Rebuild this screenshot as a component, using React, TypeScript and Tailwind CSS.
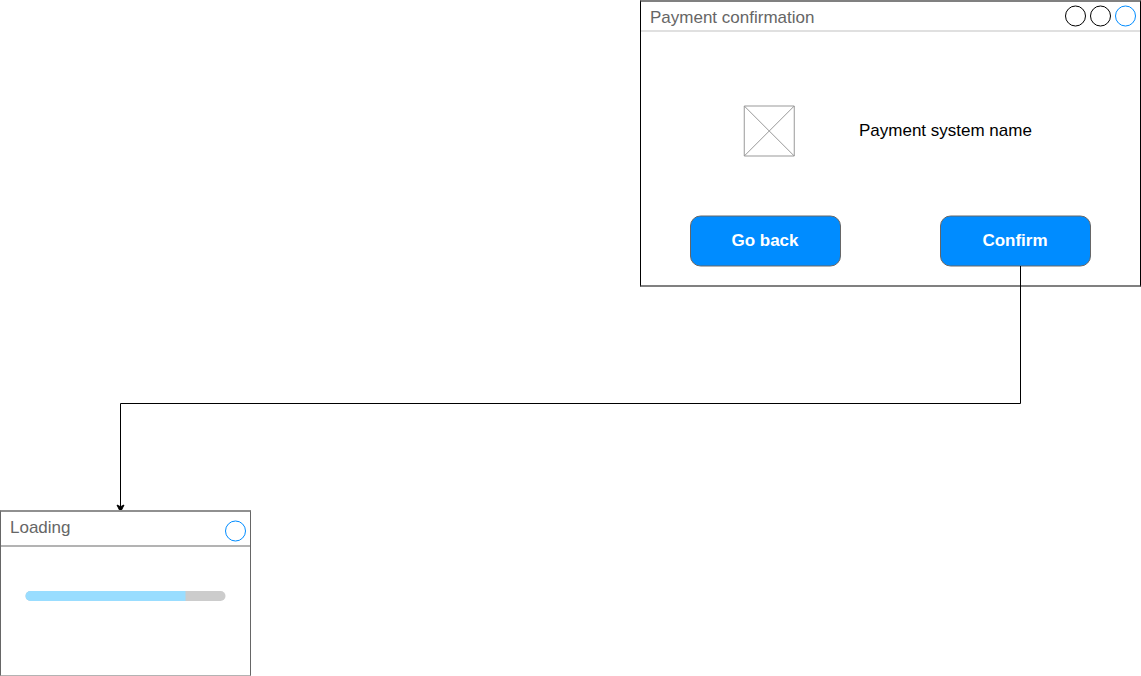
import type { ReactNode } from 'react';

function Ring({ color }: { color: string }) {
  return (
    <svg width="21" height="22" viewBox="0 0 21 22" fill="none" className="block">
      <circle cx="10.5" cy="11" r="10" stroke={color} />
    </svg>
  );
}

function ActionButton({ children }: { children: ReactNode }) {
  return (
    <button className="grid h-[52px] w-[151px] place-items-center text-[17px] font-bold text-white">
      <svg width="151" height="52" viewBox="0 0 151 52" className="col-start-1 row-start-1 block">
        <rect x="0.5" y="1" width="150" height="50" rx="10" fill="#008cff" stroke="#666666" />
      </svg>
      <span className="z-10 col-start-1 row-start-1 pr-px leading-5">{children}</span>
    </button>
  );
}

function PaymentWindow() {
  return (
    <section className="absolute left-[640px] top-0 flex h-[287px] w-[501px] flex-col border-x border-y-2 border-x-black border-y-[#808080] bg-white">
      <header className="flex h-[30px] shrink-0 items-start justify-between border-b-2 border-[#e0e0e0] pl-[9px] pr-1">
        <h1 className="pt-1.5 text-[17px] leading-5 text-[#666666]">Payment confirmation</h1>
        <div className="flex gap-1 pt-[3px]">
          <Ring color="#000000" />
          <Ring color="#000000" />
          <Ring color="#008cff" />
        </div>
      </header>
      <div className="flex items-start pl-[102px] pt-[73px]">
        <svg width="53" height="52" viewBox="0 0 53 52" fill="none" stroke="#999999" className="block">
          <path d="M1.25 1H51.25V51H1.25ZM1.25 1L51.25 51M51.25 1L1.25 51" />
        </svg>
        <p className="pl-[63px] pt-4 text-[17px] leading-5 text-black">Payment system name</p>
      </div>
      <div className="flex justify-between px-[49px] pt-[58px]">
        <ActionButton>Go back</ActionButton>
        <ActionButton>Confirm</ActionButton>
      </div>
    </section>
  );
}

function LoadingWindow() {
  return (
    <section className="absolute left-0 top-[510px] flex h-[166px] w-[251px] flex-col border-x border-b border-t-2 border-x-[#666666] border-b-[#b3b3b3] border-t-[#909090] bg-white">
      <header className="flex h-[35px] shrink-0 items-start justify-between border-b-2 border-[#b3b3b3] pl-[9px] pr-1">
        <h2 className="pt-1.5 text-[17px] leading-5 text-[#666666]">Loading</h2>
        <div className="pt-2">
          <Ring color="#008cff" />
        </div>
      </header>
      <svg width="201" height="10" viewBox="0 0 201 10" className="ml-6 mt-11 block">
        <rect x="0.5" width="200" height="10" rx="5" fill="#cccccc" />
        <path d="M5.5 0H158.5Q161 5 158.5 10H5.5A5 5 0 0 1 5.5 0Z" fill="#99ddff" />
        <path d="M158 0H160.5V10H158Z" fill="#99ddff" />
      </svg>
    </section>
  );
}

function Connector() {
  return (
    <svg width="1141" height="676" viewBox="0 0 1141 676" className="pointer-events-none absolute left-0 top-0">
      <path d="M1020.5 266V403.5H120.5V507" fill="none" stroke="#000000" />
      <path d="M120.5 512L117 505L120.5 506.75L124 505Z" stroke="#000000" />
    </svg>
  );
}

export default function App() {
  return (
    <main className="relative h-[676px] w-[1141px] overflow-hidden bg-white font-['Liberation_Sans',Arial,sans-serif]">
      <PaymentWindow />
      <Connector />
      <LoadingWindow />
    </main>
  );
}
